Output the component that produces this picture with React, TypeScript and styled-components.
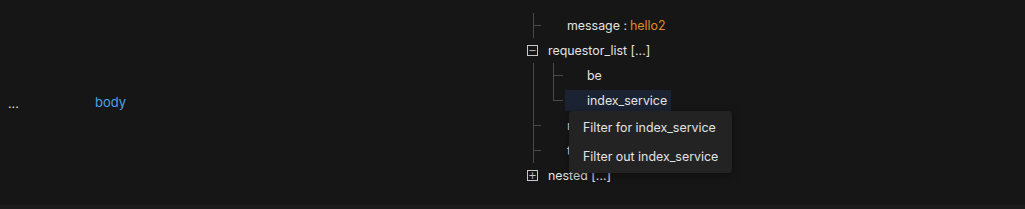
import styled, { createGlobalStyle, css } from "styled-components";

const COLOR = {
  BG: "#161616",
  NEXT_ROW: "#1c1c1c",
  TEXT: "#e4e4e4",
  KEY: "#4ba3e3",
  STRING: "#e08a2c",
  GUIDE: "#4a4a4a",
  TOGGLE: "#c8c8c8",
  SELECTED: "#1b2332",
  MENU: "#232323",
};

const GlobalStyle = createGlobalStyle`
  html, body {
    margin: 0;
    background: ${COLOR.BG};
    color: ${COLOR.TEXT};
    font-family: Inter, "Noto Sans", sans-serif;
    font-size: 12.4px;
  }
`;

type LineKind = "full" | "end" | "none";

const App = () => {
  return (
    <>
      <GlobalStyle />
      <Table>
        <DocRow>
          <ExpandCell>...</ExpandCell>
          <KeyCell>body</KeyCell>
          <ValueCell>
            <TreeRow>
              <Guide $line="full" $tick />
              <Label>
                message : <StringValue>hello2</StringValue>
              </Label>
            </TreeRow>
            <TreeRow>
              <Guide $line="none">
                <Toggle>−</Toggle>
              </Guide>
              <BranchLabel>requestor_list [...]</BranchLabel>
            </TreeRow>
            <TreeRow>
              <Guide $line="full" />
              <Guide $line="full" $tick $long />
              <Label>be</Label>
            </TreeRow>
            <TreeRow>
              <Guide $line="full" />
              <Guide $line="end" $tick $long />
              <MenuAnchor>
                <Label $selected>index_service</Label>
                <ContextMenu>
                  <MenuItem>Filter for index_service</MenuItem>
                  <MenuItem>Filter out index_service</MenuItem>
                </ContextMenu>
              </MenuAnchor>
            </TreeRow>
            <TreeRow>
              <Guide $line="full" $tick />
              <Label>request_id : 7f21</Label>
            </TreeRow>
            <TreeRow>
              <Guide $line="full" $tick />
              <Label>timestamp : 1712</Label>
            </TreeRow>
            <TreeRow>
              <Guide $line="none">
                <Toggle>+</Toggle>
              </Guide>
              <BranchLabel>nested [...]</BranchLabel>
            </TreeRow>
          </ValueCell>
        </DocRow>
        <NextRow />
      </Table>
    </>
  );
};

const Table = styled.div`
  width: 1025px;
  height: 209px;
  overflow: hidden;
  display: flex;
  flex-direction: column;
`;

const DocRow = styled.div`
  display: flex;
  height: 205px;
`;

const ExpandCell = styled.div`
  width: 87px;
  padding-left: 8px;
  align-self: center;
  margin-top: 4px;
  line-height: 1;
`;

const KeyCell = styled.div`
  width: 425px;
  align-self: center;
  color: ${COLOR.KEY};
  line-height: 1;
  font-size: 13px;
`;

const ValueCell = styled.div`
  flex: 1;
  padding-top: 13px;
  display: flex;
  flex-direction: column;
`;

const TreeRow = styled.div`
  height: 25px;
  display: flex;
  align-items: center;
  position: relative;
`;

const Guide = styled.div<{ $line: LineKind; $tick?: boolean; $long?: boolean }>`
  width: 20px;
  height: 100%;
  position: relative;
  flex-shrink: 0;

  ${({ $line }) =>
    $line !== "none" &&
    css`
      &::before {
        content: "";
        position: absolute;
        left: 13px;
        top: 0;
        width: 1px;
        height: ${$line === "full" ? "100%" : "50%"};
        background: ${COLOR.GUIDE};
      }
    `}

  ${({ $tick, $long }) =>
    $tick &&
    css`
      &::after {
        content: "";
        position: absolute;
        left: 13px;
        top: 12px;
        width: ${$long ? 10 : 8}px;
        height: 1px;
        background: ${COLOR.GUIDE};
      }
    `}
`;

const Toggle = styled.div`
  position: absolute;
  left: 7px;
  top: 7px;
  width: 9px;
  height: 9px;
  border: 1px solid ${COLOR.TOGGLE};
  color: ${COLOR.TOGGLE};
  display: flex;
  align-items: center;
  justify-content: center;
  font-size: 10px;
  line-height: 1;
  font-family: "DejaVu Sans", sans-serif;
`;

const Label = styled.div<{ $selected?: boolean }>`
  margin-left: 5px;
  padding: 0 4px 0 22px;
  height: 21px;
  display: flex;
  align-items: center;
  white-space: nowrap;
  background: ${({ $selected }) => ($selected ? COLOR.SELECTED : "transparent")};
`;

const BranchLabel = styled.div`
  margin-left: 8px;
  white-space: nowrap;
`;

const StringValue = styled.span`
  color: ${COLOR.STRING};
  margin-left: 3px;
`;

const MenuAnchor = styled.div`
  position: relative;
`;

const ContextMenu = styled.div`
  position: absolute;
  left: 9px;
  top: 21px;
  width: 163px;
  padding: 2px 0;
  background: ${COLOR.MENU};
  border-radius: 4px;
  box-shadow: 0 2px 8px rgba(0, 0, 0, 0.4);
  z-index: 2;
`;

const MenuItem = styled.div`
  height: 29px;
  padding-left: 14px;
  display: flex;
  align-items: center;
  white-space: nowrap;
`;

const NextRow = styled.div`
  height: 4px;
  background: ${COLOR.NEXT_ROW};
`;

export default App;
